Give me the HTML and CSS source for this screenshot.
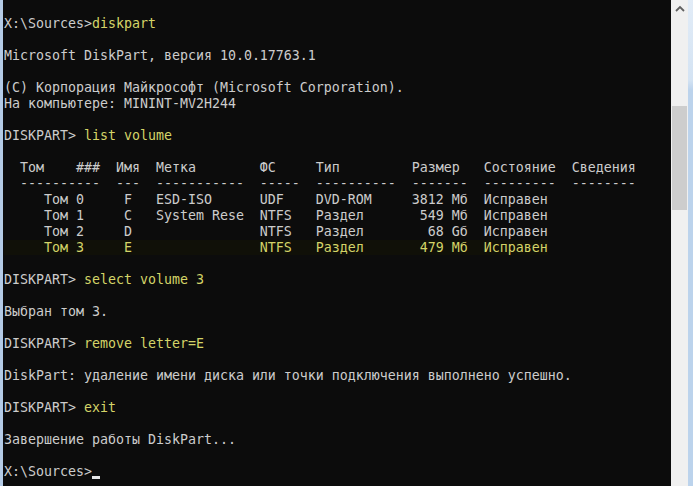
FILE: index.html
```html
<!DOCTYPE html>
<html lang="ru">
<head>
<meta charset="utf-8">
<title>DiskPart</title>
<link rel="stylesheet" href="styles.css">
</head>
<body>
<div class="window">
  <div class="edge-left"></div>
  <pre class="console">X:\Sources&gt;<span class="cmd">diskpart</span>

Microsoft DiskPart, версия 10.0.17763.1

(C) Корпорация Майкрософт (Microsoft Corporation).
На компьютере: MININT-MV2H244

DISKPART&gt; <span class="cmd">list volume</span>

  Том    ###  Имя  Метка        ФС     Тип         Размер   Состояние  Сведения
  ----------  ---  -----------  -----  ----------  -------  ---------  --------
     Том 0     F   ESD-ISO      UDF    DVD-ROM     3812 Мб  Исправен
     Том 1     C   System Rese  NTFS   Раздел       549 Мб  Исправен
     Том 2     D                NTFS   Раздел        68 Gб  Исправен
<span class="cmd sel">     Том 3     E                NTFS   Раздел       479 Мб  Исправен</span>

DISKPART&gt; <span class="cmd">select volume 3</span>

Выбран том 3.

DISKPART&gt; <span class="cmd">remove letter=E</span>

DiskPart: удаление имени диска или точки подключения выполнено успешно.

DISKPART&gt; <span class="cmd">exit</span>

Завершение работы DiskPart...

X:\Sources&gt;<span class="cursor"></span></pre>
  <div class="scrollbar">
    <div class="arrow-btn">
      <svg width="10" height="7" viewBox="0 0 10 7"><path d="M1 6 L5 2 L9 6" fill="none" stroke="#606060" stroke-width="1.8"/></svg>
    </div>
    <div class="thumb"></div>
  </div>
  <div class="edge-right"></div>
</div>
</body>
</html>
```

FILE: styles.css
```css
html, body {
  margin: 0;
  padding: 0;
  background: #0c0c0c;
}
.window {
  display: flex;
  width: 693px;
  height: 486px;
  overflow: hidden;
}
.edge-left {
  width: 3px;
  flex: none;
  background: #b4cbe6;
}
.console {
  flex: 1;
  margin: 0;
  padding: 16px 0 0 1px;
  background: #0c0c0c;
  color: #cccccc;
  font-family: "DejaVu Sans Mono", "Liberation Mono", monospace;
  font-size: 13.29px;
  line-height: 16px;
  white-space: pre;
  overflow: hidden;
}
.cmd {
  color: #d4d468;
}
.sel {
  background: #101008;
}
.cursor {
  display: inline-block;
  width: 8px;
  height: 3px;
  background: #e6e6e6;
  vertical-align: -3px;
}
.scrollbar {
  width: 17px;
  flex: none;
  background: #f0f0f0;
  display: flex;
  flex-direction: column;
  align-items: center;
}
.arrow-btn {
  height: 17px;
  width: 17px;
  display: flex;
  align-items: center;
  justify-content: center;
}
.thumb {
  margin-top: 89px;
  width: 15px;
  height: 104px;
  background: #cdcdcd;
}
.edge-right {
  width: 5px;
  flex: none;
  background: linear-gradient(to bottom, #e2ecf7 0px, #d4e3f3 80px, #bcd3ec 90px, #bcd3ec 100%);
}
```
